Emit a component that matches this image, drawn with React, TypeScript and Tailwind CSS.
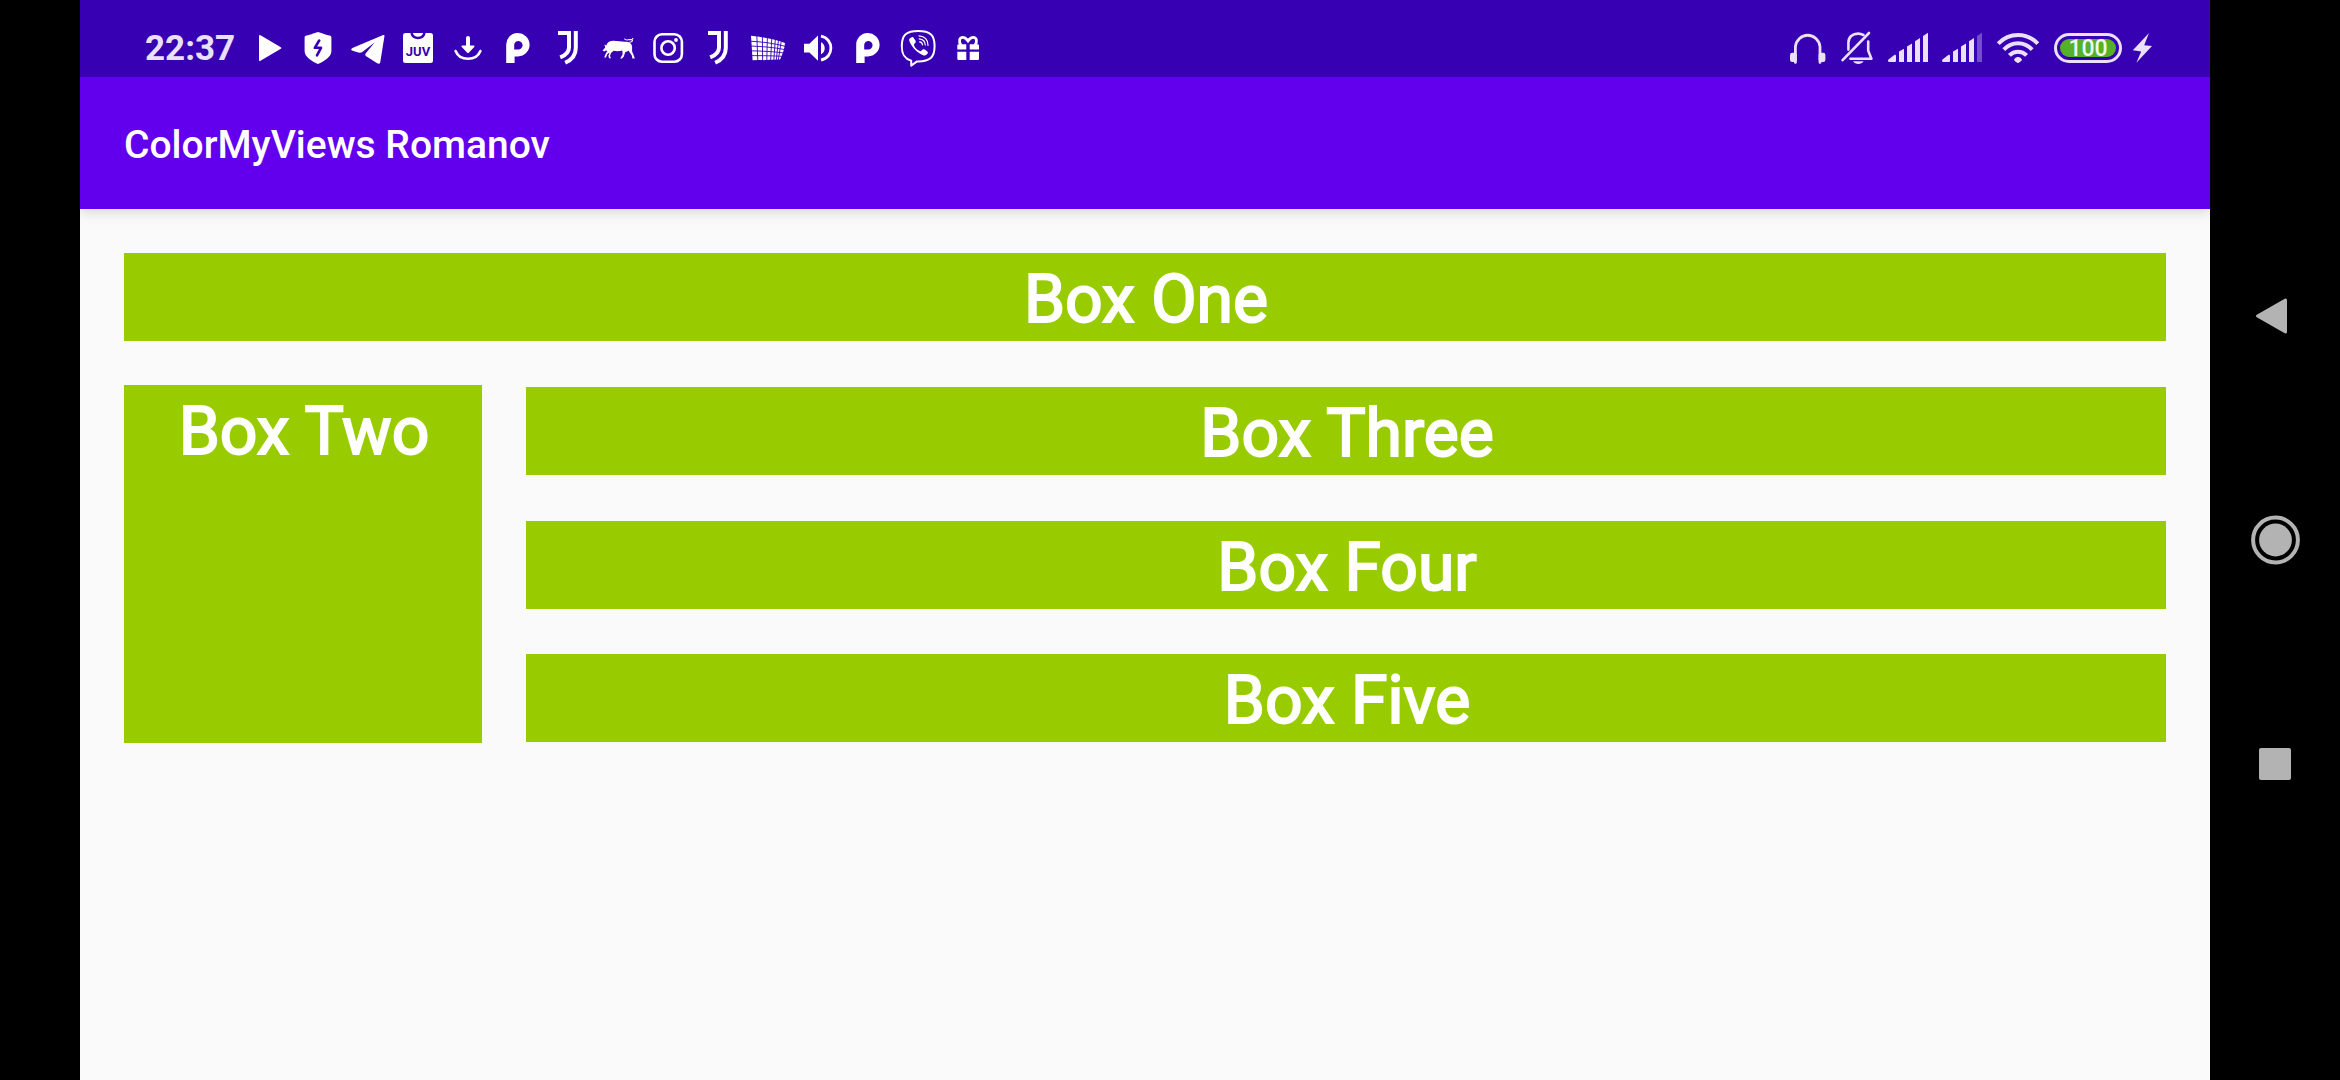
import type { ReactNode } from "react";

const STATUS = "#3700b3";

function Icon({ width = 50, label, children }: { width?: number; label: string; children: ReactNode }) {
  return (
    <svg
      role="img"
      aria-label={label}
      width={width}
      height={40}
      viewBox={`0 28 ${width} 40`}
      fill="currentColor"
      className="shrink-0"
    >
      {children}
    </svg>
  );
}

function PlayIcon() {
  return (
    <Icon label="Play">
      <path d="M17 36 L37.3 48 L17 60 Z" stroke="currentColor" strokeWidth="2" strokeLinejoin="round" />
    </Icon>
  );
}

function ShieldIcon() {
  return (
    <Icon label="Security">
      <path d="M25 32 C26 32 33 35 36.5 35.6 C37.8 35.8 38.4 36.4 38.4 37.6 V51 C38.4 57 31 61.5 25 64 C19 61.5 11.6 57 11.6 51 V37.6 C11.6 36.4 12.2 35.8 13.5 35.6 C17 35 24 32 25 32 Z" />
      <path
        d="M26.2 40.5 L21.8 47.8 H28 L24 55.4"
        fill="none"
        stroke={STATUS}
        strokeWidth="2.6"
        strokeLinejoin="round"
        strokeLinecap="round"
      />
    </Icon>
  );
}

function TelegramIcon() {
  return (
    <Icon label="Telegram">
      <path d="M40.2 35 C41.2 34.8 41.6 35.2 41.4 36.4 L37.3 62 C37 63.8 35.6 64.2 34.2 63.3 L23.2 56.2 C22 55.4 22 54.4 22.8 53.2 L31.6 42.6 L19.6 51.8 C17.8 53 16 52.8 13.6 52 L9 50.4 C7.8 49.8 8 48.8 9.4 48 Z" />
    </Icon>
  );
}

function JuvTicketIcon() {
  return (
    <Icon label="Juventus shirt">
      <rect x="10" y="33" width="30" height="30" rx="2.5" />
      <path d="M18.5 33 C19.5 36.8 22 38 25 38 C28 38 30.5 36.8 31.5 33" fill="none" stroke={STATUS} strokeWidth="2.6" />
      <text
        x="25"
        y="56"
        textAnchor="middle"
        fontSize="13"
        fontWeight="700"
        fontFamily="Roboto, sans-serif"
        fill={STATUS}
      >
        JUV
      </text>
    </Icon>
  );
}

function DownloadIcon() {
  return (
    <Icon label="Download">
      <path d="M23 38 a2 2 0 0 1 4 0 V45.6 H30.6 C31.6 45.6 31.8 46.4 31.2 47 L25.8 52.8 C25.3 53.3 24.7 53.3 24.2 52.8 L18.8 47 C18.2 46.4 18.4 45.6 19.4 45.6 H23 Z" />
      <path d="M12.6 51 C14.6 56 19 58.8 25 58.8 C31 58.8 35.4 56 37.4 51" fill="none" stroke="currentColor" strokeWidth="2.6" strokeLinecap="round" />
    </Icon>
  );
}

function PLogoIcon() {
  return (
    <Icon label="P logo">
      <path
        fillRule="evenodd"
        d="M13.2 63 V45.4 A11.7 11.7 0 1 1 25 56.4 H21.6 V63 Z M21.2 45 V49.4 H25 A4.2 4.2 0 1 0 21.2 45 Z"
      />
    </Icon>
  );
}

function JuventusIcon() {
  return (
    <Icon label="Juventus">
      <g fill="none" stroke="currentColor" strokeWidth="4">
        <path d="M15 32.9 H26 V47.5 C26 52.5 22.2 55.4 17.2 57.4" />
        <path d="M32.8 31 V48 C32.8 55.5 28.4 60 22.2 62.8" />
      </g>
    </Icon>
  );
}

function BullIcon() {
  return (
    <Icon label="Bull">
      <path d="M11.4 51.4 L9.6 50.6 L12.2 47.6 L11.4 44.4 L13.2 45.4 C14.4 42 17 40.8 20.6 40.8 C25 40.8 28.6 42 33 41.8 C36.4 41.8 38.4 43.4 39 46 C39.4 49 38.4 51 40 53.4 L41 56 L41.8 58.4 H39.4 L38.8 55.6 L35.6 50.8 L32.2 52.2 L30.8 56.4 L29 58.4 H27.2 L29.6 54.6 L29.4 50.4 C26.6 51.2 23.6 51.4 20.6 50.8 L18 53 L17 56 L18 58.2 H16 L15.4 55.8 L16.6 52.4 L14.4 54 L13 57.4 L11.2 57.6 L12.8 53.6 L14.4 51 L12.8 50.4 Z" />
      <path d="M36.4 42.4 C39.2 42 40.4 40.6 38.6 39.8 C36 39 32.6 41.4 31.4 38.6 M38.6 39.8 L40.2 38.2" fill="none" stroke="currentColor" strokeWidth="1.1" />
    </Icon>
  );
}

function InstagramIcon() {
  return (
    <Icon label="Instagram">
      <g fill="none" stroke="currentColor" strokeWidth="2.6">
        <rect x="11.5" y="34.3" width="27.4" height="27.4" rx="7.5" />
        <circle cx="25.1" cy="48" r="6.7" />
      </g>
      <circle cx="33" cy="40" r="1.9" />
    </Icon>
  );
}

function GridIcon() {
  return (
    <Icon label="Grid">
      <path d="M8 35.8 C19 37.2 31 38.6 42 43 C41.4 49 39.6 54.6 37 59.6 C28 60 18.5 60.2 9.6 60.3 Z" />
      <g fill="none" stroke={STATUS} strokeWidth="0.9">
        <path d="M13.8 35 L14.8 61 M19.4 35 L19.6 61 M24.4 36 L23.8 61 M28.8 37 L27.6 61 M32.4 38 L30.8 61 M35.6 39 L33.2 61 M38.4 40 L35.2 61" />
        <path d="M7 41.2 C19 41.8 31 43.2 42.4 46.4 M7 46 C19 46.4 31 47.4 42 49.6 M7 50.8 C19 51 31 51.6 41 53 M7 55.6 C19 55.6 31 55.8 40 56.4" />
      </g>
    </Icon>
  );
}

function SpeakerIcon() {
  return (
    <Icon label="Volume">
      <path d="M11 43.8 H16.4 L25 35.6 V60.8 L16.4 52.6 H11 Z" />
      <path d="M28 42.2 C33 44.4 33 52 28 54.2 Z" />
      <path d="M28 36.2 C41.2 38.6 41.2 57.6 28 60" fill="none" stroke="currentColor" strokeWidth="2.8" />
    </Icon>
  );
}

function ViberIcon() {
  return (
    <Icon label="Viber">
      <path
        d="M25.2 31 C36.8 31 41.6 34.4 41.6 46 C41.6 57.6 36.8 61.4 25.2 61.4 H24 L18.2 65.6 V60.6 C11.4 58.8 8.8 54.6 8.8 46 C8.8 34.4 13.6 31 25.2 31 Z"
        fill="none"
        stroke="currentColor"
        strokeWidth="2"
        strokeLinejoin="round"
      />
      <path d="M18.4 37.4 C19.4 36.8 20.2 37.2 21 38.4 L22.4 40.6 C23.2 42 22.6 42.8 21.6 43.6 C20.6 44.6 21 45.6 22 47.2 C23.2 49 24.8 50.2 26.6 51 C27.6 51.4 28.2 51 28.8 50.2 C29.6 49.2 30.6 48.8 31.8 49.6 L34 51.2 C35 52 35.2 52.8 34.4 53.8 C33 55.6 31.4 56 29.6 55 C22.8 51.4 18.2 46.4 16.2 40.4 C15.8 39 16.8 38.2 18.4 37.4 Z" />
      <g fill="none" stroke="currentColor" strokeWidth="1.2" strokeLinecap="round">
        <path d="M26 35.8 C31.6 36.2 35 39.8 35 45.4" />
        <path d="M26.2 38.8 C30 39.2 32.2 41.4 32.2 45" />
        <path d="M26.6 41.8 C28.4 42 29.4 43 29.4 44.8" />
      </g>
    </Icon>
  );
}

function GiftIcon() {
  return (
    <Icon label="Gift">
      <path d="M14.3 51.8 H23.3 V60 H15.6 Q14.3 60 14.3 58.8 Z M26.7 51.8 H36 V58.8 Q36 60 34.8 60 H26.7 Z" />
      <path d="M14.3 49.4 V45.6 Q14.3 44.2 15.8 44.2 H23.3 V49.4 Z M26.7 49.4 V44.2 H34.6 Q36 44.2 36 45.6 V49.4 Z" />
      <path
        d="M18 45 C15.4 41.6 16.4 37.4 19.8 37.4 C22.4 37.4 24 39.6 25 41 C26 39.6 27.6 37.4 30.2 37.4 C33.6 37.4 34.6 41.6 32 45"
        fill="none"
        stroke="currentColor"
        strokeWidth="2.8"
      />
    </Icon>
  );
}

function HeadphonesIcon() {
  return (
    <Icon width={36} label="Headphones">
      <path d="M5.4 62.4 V46.6 A12.4 13 0 0 1 30 46.6 V62.4" fill="none" stroke="currentColor" strokeWidth="2.8" strokeLinecap="round" />
      <rect x="0" y="52.8" width="6.8" height="9.2" rx="2.2" />
      <rect x="28.6" y="52.8" width="6.8" height="9.2" rx="2.2" />
    </Icon>
  );
}

function MutedBellIcon() {
  return (
    <Icon width={34} label="Muted">
      <g fill="none" stroke="currentColor" strokeWidth="2.6" strokeLinecap="round" strokeLinejoin="round">
        <path d="M2.6 60.2 L29 33" />
        <path d="M8.4 49.6 V42.6 C8.4 37 12.6 33.6 18 33.6 C20 33.6 21.6 34 23.4 35" />
        <path d="M28.2 41.6 V50.6 L31.4 58.8 H10.4" />
      </g>
      <path d="M13 61.2 H23.6 C22.4 63 20.6 64 18.3 64 C16 64 14.2 63 13 61.2 Z" />
    </Icon>
  );
}

function SignalIcon({ weak = false }: { weak?: boolean }) {
  return (
    <Icon width={40} label={weak ? "Signal 4 of 5" : "Signal 5 of 5"}>
      <path d="M1 62 Q-0.4 61.6 0.2 59.8 L6.6 54.8 Q8 54.4 8 55.8 V61 Q8 62 7 62 Z" />
      <path d="M11 51.6 L16 48.8 V62 H11 Z" />
      <path d="M19 46.4 L24 43.6 V62 H19 Z" />
      <path d="M27 41.2 L32 38 V62 H27 Z" />
      <path d="M35 36 L40 32.8 V62 H35 Z" opacity={weak ? 0.35 : 1} />
    </Icon>
  );
}

function WifiIcon() {
  return (
    <Icon width={44} label="Wi-Fi">
      <g fill="none" stroke="currentColor" strokeWidth="4">
        <path d="M2.2 43.6 C13.4 32.2 30.6 32.2 41.8 43.6" />
        <path d="M7.8 49.6 C16 41.2 28 41.2 36.2 49.6" />
        <path d="M13.4 55.4 C18.2 50.4 25.8 50.4 30.6 55.4" />
      </g>
      <path d="M18.4 59 C20.4 56.4 23.6 56.4 25.6 59 C26.4 60 25.8 60.8 22.8 62.8 Q22 63.2 21.2 62.8 C18.2 60.8 17.6 60 18.4 59 Z" />
    </Icon>
  );
}

function Battery() {
  return (
    <div className="flex items-center gap-[10px]">
      <div className="h-[30px] w-[68px] rounded-full border-[3px] border-[#ebe0fb] p-[3px]">
        <div className="flex h-full items-center justify-center rounded-full bg-[#55b02a] text-[23px] leading-none font-medium text-[#f2f7ee]">
          100
        </div>
      </div>
      <Icon width={20} label="Charging">
        <path d="M17 33 L0.8 50.2 L9.2 51.4 L4.4 62.8 L20 46 L12.2 45.2 Z" />
      </Icon>
    </div>
  );
}

function StatusBar() {
  return (
    <div className="flex h-[77px] items-center justify-between bg-[#3700b3] pt-[19px] pr-[58px] pl-[65px]">
      <div className="flex items-center text-white">
        <time className="w-[98px] pt-[2px] text-[35px] leading-10 font-bold text-[#ebe0fb]">22:37</time>
        <PlayIcon />
        <ShieldIcon />
        <TelegramIcon />
        <JuvTicketIcon />
        <DownloadIcon />
        <PLogoIcon />
        <JuventusIcon />
        <BullIcon />
        <InstagramIcon />
        <JuventusIcon />
        <GridIcon />
        <SpeakerIcon />
        <PLogoIcon />
        <ViberIcon />
        <GiftIcon />
      </div>
      <div className="flex items-center gap-[14px] text-[#ebe0fb]">
        <HeadphonesIcon />
        <MutedBellIcon />
        <SignalIcon />
        <SignalIcon weak />
        <WifiIcon />
        <Battery />
      </div>
    </div>
  );
}

function Box({ label, square = false }: { label: string; square?: boolean }) {
  return (
    <div
      className={
        "bg-[#99cc00] pt-[6px] pl-[2px] text-center text-[66px] leading-[82px] whitespace-nowrap text-white [-webkit-text-stroke:2px_white] " +
        (square ? "aspect-square w-[358px] shrink-0" : "")
      }
    >
      {label}
    </div>
  );
}

function NavButton({ label, children }: { label: string; children: ReactNode }) {
  return (
    <button type="button" aria-label={label} className="flex h-56 w-full items-center justify-center">
      <svg width="50" height="50" viewBox="0 0 50 50" fill="#b3b3b3">
        {children}
      </svg>
    </button>
  );
}

export default function App() {
  return (
    <div className="flex min-h-screen bg-black font-[Roboto,sans-serif]">
      <div className="w-20 shrink-0" />
      <div className="flex min-w-0 flex-1 flex-col bg-[#fafafa]">
        <header className="shadow-[0_4px_12px_rgba(0,0,0,0.13)]">
          <StatusBar />
          <div className="flex h-[132px] items-center bg-[#6200ee] px-11">
            <h1 className="pt-1 text-[39px] leading-12 font-medium text-white">ColorMyViews Romanov</h1>
          </div>
        </header>
        <main className="flex flex-col gap-11 p-11">
          <Box label="Box One" />
          <div className="flex gap-11">
            <Box label="Box Two" square />
            <div className="flex flex-1 flex-col justify-between pt-[2px] pb-px">
              <Box label="Box Three" />
              <Box label="Box Four" />
              <Box label="Box Five" />
            </div>
          </div>
        </main>
      </div>
      <nav className="flex w-[130px] shrink-0 flex-col justify-center">
        <NavButton label="Back">
          <path d="M7.5 25 L35.5 9 V41 Z" stroke="#b3b3b3" strokeWidth="3" strokeLinejoin="round" />
        </NavButton>
        <NavButton label="Home">
          <circle cx="25.5" cy="25" r="16.4" />
          <circle cx="25.5" cy="25" r="22.4" fill="none" stroke="#b3b3b3" strokeWidth="4" />
        </NavButton>
        <NavButton label="Recent apps">
          <rect x="9" y="9" width="32" height="32" rx="2" />
        </NavButton>
      </nav>
    </div>
  );
}
